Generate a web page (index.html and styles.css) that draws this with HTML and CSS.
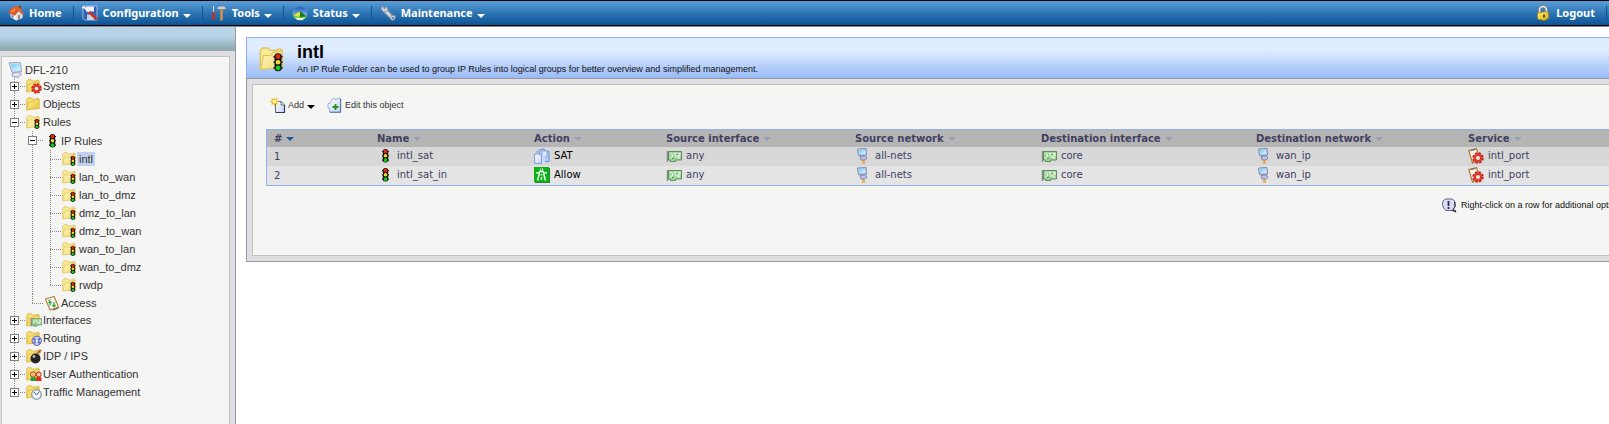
FILE: index.html
```html
<!DOCTYPE html>
<html lang="en">
<head>
<meta charset="utf-8">
<title>DFL-210 - intl</title>
<link rel="stylesheet" href="styles.css">
</head>
<body>
<svg class="defs" aria-hidden="true">
  <defs>
    <linearGradient id="gFolder" x1="0" y1="0" x2="1" y2="1"><stop offset="0" stop-color="#fffbc8"/><stop offset="1" stop-color="#f0d76a"/></linearGradient>
    <linearGradient id="gGold" x1="0" y1="0" x2="1" y2="1"><stop offset="0" stop-color="#fff49c"/><stop offset="1" stop-color="#e9bc2c"/></linearGradient>
    <linearGradient id="gScreen" x1="0" y1="0" x2="1" y2="1"><stop offset="0" stop-color="#6cc9f7"/><stop offset="1" stop-color="#e4f8ff"/></linearGradient>
    <linearGradient id="gPage" x1="0" y1="0" x2="1" y2="1"><stop offset="0" stop-color="#ffffff"/><stop offset="1" stop-color="#c3d3f2"/></linearGradient>
    <linearGradient id="gLock" x1="0" y1="0" x2="1" y2="1"><stop offset="0" stop-color="#fff27a"/><stop offset="1" stop-color="#d9a90c"/></linearGradient>
    <linearGradient id="gSky" x1="0" y1="0" x2="0" y2="1"><stop offset="0" stop-color="#1b55b8"/><stop offset="1" stop-color="#b4dcfb"/></linearGradient>
  </defs>
  <symbol id="folder" viewBox="0 0 16 16">
    <path d="M.7 13.800V3.200L2 1.700h3.200l1 1.300h4l.8-.8h1.500V6" fill="#f9ea96" stroke="#dfc468" stroke-width=".8"/>
    <path d="M.9 14L2.500 6h4l1.800-1.800L13.300 3.200v9.300z" fill="url(#gFolder)" stroke="#e0c45c" stroke-width=".7"/>
  </symbol>
  <symbol id="folder-gold" viewBox="0 0 16 16">
    <path d="M.7 13.800V3.200L2 1.700h3.200l1 1.300h4l.8-.8h1.500V6" fill="#f6df74" stroke="#d8b545" stroke-width=".8"/>
    <path d="M.9 14L2.500 6h4l1.800-1.800L13.300 3.200v9.300z" fill="url(#gGold)" stroke="#dab53f" stroke-width=".7"/>
  </symbol>
  <symbol id="light" viewBox="0 0 16 16">
    <path d="M5 3.500h7M5 7.800h7M5 12.200h7" stroke="#111" stroke-width="1.200"/>
    <rect x="5.800" y="1" width="5.400" height="13.600" rx="2.500" fill="#111"/>
    <circle cx="8.500" cy="3.500" r="1.900" fill="#e02617"/><circle cx="8.500" cy="7.800" r="1.800" fill="#f2d934"/><circle cx="8.500" cy="12.100" r="1.900" fill="#16c81c"/>
  </symbol>
  <symbol id="gear" viewBox="0 0 16 16">
    <circle cx="8" cy="8" r="6.400" fill="none" stroke="#b71f16" stroke-width="2.400" stroke-dasharray="3.200 1.820"/>
    <circle cx="8" cy="8" r="4.400" fill="#f6e9e2" stroke="#db3a2c" stroke-width="3.400"/>
  </symbol>
  <symbol id="f-light" viewBox="0 0 16 16"><use href="#folder" width="16" height="16"/><use href="#light" x="4.500" y="4" width="12" height="12"/></symbol>
  <symbol id="f-gear" viewBox="0 0 16 16"><use href="#folder-gold" width="16" height="16"/><use href="#gear" x="5" y="5" width="11" height="11"/></symbol>
  <symbol id="card" viewBox="0 0 16 16">
    <path d="M1.500 3v11" stroke="#858b85" stroke-width="1.500"/>
    <path d="M2.500 3.500h13v8.500h-6v1.500h-5V12h-2z" fill="#a5d6a0" stroke="#548353" stroke-width=".9"/>
    <path d="M4.500 5.500l2 1v2l-2 1.500M8 5.500h2l-1 2 2 2M12 5.500h2v2h-2v2.500h2" stroke="#edfaea" fill="none"/>
    <path d="M6 11l2-1M11 6v1" stroke="#398d38"/>
  </symbol>
  <symbol id="f-card" viewBox="0 0 16 16"><use href="#folder-gold" width="16" height="16"/><use href="#card" x="4" y="4" width="12" height="12"/></symbol>
  <symbol id="f-route" viewBox="0 0 16 16"><use href="#folder-gold" width="16" height="16"/><circle cx="10.800" cy="10.800" r="4.700" fill="#c2c5ef" stroke="#6368b4"/><path d="M7.500 8.500l2 2M14 8.500l-2 2M7.500 13.500l2-2M14 13.500l-2-2" stroke="#4c51a4" stroke-width="1.300"/><circle cx="10.800" cy="10.800" r="1" fill="#fff"/></symbol>
  <symbol id="f-bomb" viewBox="0 0 16 16"><use href="#folder-gold" width="16" height="16"/><path d="M11 6l2-2.500 1.500.5" stroke="#65564a" stroke-width="1.200" fill="none"/><path d="M14 1v4M12.500 2.500h3.500" stroke="#ef6a25"/><circle cx="9.500" cy="10.500" r="5" fill="#252525"/><circle cx="8" cy="8.500" r="1.400" fill="#b6b6b6"/></symbol>
  <symbol id="f-user" viewBox="0 0 16 16"><use href="#folder-gold" width="16" height="16"/><path d="M4.500 15v-3q3-3 5.500 0v3z" fill="#2ba13b"/><circle cx="7" cy="8.500" r="2.700" fill="#f1ba78" stroke="#a45a19"/><path d="M10 15v-3q3-3 5.500 0v3z" fill="#e22a20"/><circle cx="12.700" cy="8.500" r="2.500" fill="#f2c5ab" stroke="#b8251c"/></symbol>
  <symbol id="f-clock" viewBox="0 0 16 16"><use href="#folder-gold" width="16" height="16"/><circle cx="10.500" cy="10.500" r="4.800" fill="#eef3f8" stroke="#8798aa" stroke-width="1.200"/><path d="M8 8l2.500 3 3-3.500" fill="none" stroke="#45678c"/></symbol>
  <symbol id="access" viewBox="0 0 16 16"><path d="M1.500 4L10 1.500 14.500 12 6 15z" fill="#fafcf8" stroke="#b3843e" stroke-width="1.200"/><path d="M4 5.500l3-1" stroke="#999"/><path d="M6 6.500v4M4.800 8L6 6.300 7.500 8M10 7v4.500M8.500 10l1.500 1.700 1.500-1.700" fill="none" stroke="#27a330" stroke-width="1.200"/><path d="M9 15l5.500-2.500" stroke="#91714a" stroke-width="1.500"/></symbol>
  <symbol id="pc" viewBox="0 0 16 16">
    <path d="M1 .8l11.500-.3 1 9-9.500 1z" fill="#d1dcf1" stroke="#8798bb" stroke-width=".8"/>
    <path d="M2.800 2.200l8.700-.3.700 6-7.200.9z" fill="url(#gScreen)"/>
    <path d="M4 11.500l8-1.500 1.500 2.500-3.500 3-6-1.500z" fill="#d3d3ee" stroke="#9c9cc6" stroke-width=".8"/><path d="M5.500 13l5-.8" stroke="#fff"/>
  </symbol>
  <symbol id="net" viewBox="0 0 16 16">
    <path d="M2.500 1l8.500-.5.500 6.500-8 .5z" fill="#c4cfe8" stroke="#7d8db5"/>
    <path d="M4 2.200l6-.3.300 4-5.800.4z" fill="url(#gScreen)"/>
    <path d="M5 8.500l5.500-.7 1.500 2.500-2 1.700H6z" fill="#bdc0e0" stroke="#8287b2"/>
    <path d="M8.500 12v2" stroke="#9a9a9a"/><rect x="7" y="13" width="3" height="3" fill="#f2b14a"/>
  </symbol>
  <symbol id="sat" viewBox="0 0 16 16"><path d="M5 2l5-1 1 2 4 .5v10H6z" fill="#b3ccf8" stroke="#6f91d6"/><path d="M8 3h5v6H8z" fill="#dfe9ff" stroke="#86a5e4"/><path d="M.6 6h5l2 2v7.400H.6z" fill="url(#gPage)" stroke="#7d9ad8"/><path d="M8 8l3-1v7H8z" fill="#c8dafb"/><path d="M3 3v2" stroke="#769ae2"/></symbol>
  <symbol id="allow" viewBox="0 0 16 16"><path d="M1 1h15v15H1z" fill="#367b39"/><path d="M0 0h15v15H0z" fill="#09b316"/><path d="M5.500 6L3.500 13.500M9.500 6l2 7.500M7.500 7v1.500M7.500 10v3" stroke="#eaffea" stroke-width="1.500"/><path d="M2 5.700h3l1-1.200h3l1 1.200h3" fill="none" stroke="#eaffea" stroke-width="1.400"/><path d="M6.500 1.500v3M8.500 1.500v3" stroke="#eaffea"/></symbol>
  <symbol id="service" viewBox="0 0 16 16"><path d="M.8 2.500L8.500.8 12 11l-7.500 4z" fill="#faf4ea" stroke="#b17531" stroke-width="1.200"/><path d="M3 2.500l4-1.200" stroke="#777" stroke-width="1.500"/><use href="#gear" x="4" y="4" width="12" height="12"/></symbol>
  <symbol id="home" viewBox="0 0 16 16"><path d="M2.500 8L7 5l7.500 4-.5 4-6 2.500L2.500 12z" fill="#f2f3f8"/><path d="M8 10v5.500l6.500-2.500V8.500L11.500 6z" fill="#dcdfea"/><path d="M0 7.500L5 2l5.500-1L16 9l-2 .8L10.500 6 7 10.500z" fill="#e0622c"/><path d="M0 7.500L5 2l5 4-3 4.500z" fill="#d9531f"/><path d="M2.500 6.500L6 3l2 2-3.500 3z" fill="#f58a4e"/><path d="M11 .8h2V4l-2-1.500z" fill="#963d20"/><path d="M3.500 9.500l2 1v2.500l-2-1z" fill="#5e79ad"/><path d="M10 10.500l2-.8v4l-2 .8z" fill="#ad7650"/></symbol>
  <symbol id="config" viewBox="0 0 16 16"><path d="M1 1h14v14H2.500L1 13.500z" fill="#345fb0" stroke="#b7cdf1" stroke-width=".8"/><path d="M4 1.500h8v5H4z" fill="#eff4fc"/><path d="M5 9.500h7V15H5z" fill="#c7d4e8"/><path d="M0 3l2-1 5 5" fill="none" stroke="#f0f0f0" stroke-width="1.800"/><path d="M7 7l8 7.500" stroke="#cf3023" stroke-width="2.500"/></symbol>
  <symbol id="tools" viewBox="0 0 16 16"><path d="M2.500 1v7" stroke="#d6dce3"/><path d="M2.500 7v8" stroke="#cf2b1d" stroke-width="2.500"/><path d="M10.500 4v11.500" stroke="#d69345" stroke-width="2.500"/><path d="M5.500 3.500Q7 1 9 1h4q2 1 2.500 3l-2.500.5H8z" fill="#cbd1d8" stroke="#6d7883" stroke-width=".7"/></symbol>
  <symbol id="status" viewBox="0 0 16 16"><ellipse cx="8" cy="8" rx="7.400" ry="6.600" fill="url(#gSky)" stroke="#4f93d5" stroke-width=".6"/><path d="M1 10.500Q3 8 8 7l7 4.500Q12 15 8 15T1 10.500z" fill="#6fcb38"/><path d="M8 6l6.500 5.500L7.500 12z" fill="#157d22"/><path d="M2 10.500l6-4-.5 5.500z" fill="#f5e43d"/><path d="M2.500 12.500q5 1.500 11 0-2 2.700-5.500 2.700t-5.500-2.700z" fill="#edf7d9"/></symbol>
  <symbol id="wrench" viewBox="0 0 16 16"><path d="M4 4.500L12.500 13" stroke="#8990a3" stroke-width="4.600" stroke-linecap="round"/><path d="M4 4.500L12.500 13" stroke="#d1d5e2" stroke-width="2.800" stroke-linecap="round"/><path d="M3 .8L1 3.200l2.200 3.600 3.600-.3 1-3L5.500 1v2.500L4 4z" fill="#d4d7e4" stroke="#81889c" stroke-width=".7"/><path d="M11 10.500l4.300-.2L15 14l-3 1.500-1.500-2z" fill="#ccd0df" stroke="#81889c" stroke-width=".7"/><circle cx="13" cy="13" r="1" fill="#3c6fa9"/></symbol>
  <symbol id="lock" viewBox="0 0 16 16"><path d="M4.500 8V4.500Q5 1.500 8 1.500t3.500 3V7" fill="none" stroke="#777b7f" stroke-width="2.800"/><path d="M4.500 8V4.500Q5 1.500 8 1.500t3.500 3V7" fill="none" stroke="#e4e7e9" stroke-width="1.500"/><path d="M2.500 8l8.500-1.500 2.500 1.300v5.400L9.500 15.500l-7-1.500z" fill="url(#gLock)" stroke="#9e8212" stroke-width=".7"/><path d="M9 9.500v3" stroke="#42370c" stroke-width="1.600"/></symbol>
  <symbol id="add" viewBox="0 0 16 16"><path d="M5.500 4.500h6l3 3v8h-9z" fill="url(#gPage)" stroke="#5f6d85"/><path d="M14.500 8v7.500H6" fill="none" stroke="#2d3a54" stroke-width="1.200"/><path d="M11 4.500v3.500h3.500" fill="#fff" stroke="#516485"/><path d="M4.500 1v8M.5 4.500h8M1.500 1.500l6 6M7.500 1.500l-6 6" stroke="#e8b71e" stroke-width="1.300"/><circle cx="4.500" cy="4.500" r="1.900" fill="#fff59c"/></symbol>
  <symbol id="edit" viewBox="0 0 16 16"><path d="M4.500 3.500l2-2.500 1.500 1.500L13.500 1v14H2.500V11H1V6.500h2z" fill="url(#gPage)" stroke="#86a1d6" stroke-width=".8"/><path d="M13.700 2v13.300H3" stroke="#49679f" stroke-width=".9" fill="none"/><path d="M8.500 7v6M5.500 10h6" stroke="#24951c" stroke-width="1.800"/></symbol>
  <symbol id="hint" viewBox="0 0 16 16"><path d="M5 2h6q3 1 3.500 4.500T12 12.500l3 2.500-4-1.500H5Q2 12 1.500 7.500T5 2z" fill="#dcdcf1" stroke="#64658c"/><path d="M13.500 5q2 5-2 8.500l3.500 1-1-1.500" fill="none" stroke="#272943"/><path d="M7.500 4v5M7.500 10v2" stroke="#282a50" stroke-width="1.800"/></symbol>
</svg>

<nav class="menu">
  <a class="menu-item" href="#"><svg class="icon"><use href="#home"/></svg>Home</a>
  <button class="menu-item" type="button"><svg class="icon"><use href="#config"/></svg>Configuration<span class="caret"></span></button>
  <button class="menu-item" type="button"><svg class="icon"><use href="#tools"/></svg>Tools<span class="caret"></span></button>
  <button class="menu-item" type="button"><svg class="icon"><use href="#status"/></svg>Status<span class="caret"></span></button>
  <button class="menu-item last" type="button"><svg class="icon"><use href="#wrench"/></svg>Maintenance<span class="caret"></span></button>
  <a class="menu-item logout" href="#"><svg class="icon"><use href="#lock"/></svg>Logout</a>
</nav>

<div class="page">
  <aside class="sidebar">
    <div class="sidebar-top"></div>
    <div class="tree-panel">
      <a class="root" href="#"><svg class="icon"><use href="#pc"/></svg>DFL-210</a>
      <ul class="tree">
        <li><div class="row"><button class="toggle" type="button" aria-label="Expand System"></button><a href="#"><svg class="icon"><use href="#f-gear"/></svg><span>System</span></a></div></li>
        <li><div class="row"><button class="toggle" type="button" aria-label="Expand Objects"></button><a href="#"><svg class="icon"><use href="#folder-gold"/></svg><span>Objects</span></a></div></li>
        <li><div class="row"><button class="toggle open" type="button" aria-label="Collapse Rules"></button><a href="#"><svg class="icon"><use href="#f-light"/></svg><span>Rules</span></a></div>
          <ul>
            <li><div class="row tall"><button class="toggle open" type="button" aria-label="Collapse IP Rules"></button><a href="#"><svg class="icon"><use href="#light"/></svg><span>IP Rules</span></a></div>
              <ul>
                <li><div class="row leaf"><a href="#"><svg class="icon"><use href="#f-light"/></svg><span class="selected">intl</span></a></div></li>
                <li><div class="row leaf"><a href="#"><svg class="icon"><use href="#f-light"/></svg><span>lan_to_wan</span></a></div></li>
                <li><div class="row leaf"><a href="#"><svg class="icon"><use href="#f-light"/></svg><span>lan_to_dmz</span></a></div></li>
                <li><div class="row leaf"><a href="#"><svg class="icon"><use href="#f-light"/></svg><span>dmz_to_lan</span></a></div></li>
                <li><div class="row leaf"><a href="#"><svg class="icon"><use href="#f-light"/></svg><span>dmz_to_wan</span></a></div></li>
                <li><div class="row leaf"><a href="#"><svg class="icon"><use href="#f-light"/></svg><span>wan_to_lan</span></a></div></li>
                <li><div class="row leaf"><a href="#"><svg class="icon"><use href="#f-light"/></svg><span>wan_to_dmz</span></a></div></li>
                <li><div class="row leaf"><a href="#"><svg class="icon"><use href="#f-light"/></svg><span>rwdp</span></a></div></li>
              </ul>
            </li>
            <li><div class="row leaf short"><a href="#"><svg class="icon"><use href="#access"/></svg><span>Access</span></a></div></li>
          </ul>
        </li>
        <li><div class="row"><button class="toggle" type="button" aria-label="Expand Interfaces"></button><a href="#"><svg class="icon"><use href="#f-card"/></svg><span>Interfaces</span></a></div></li>
        <li><div class="row"><button class="toggle" type="button" aria-label="Expand Routing"></button><a href="#"><svg class="icon"><use href="#f-route"/></svg><span>Routing</span></a></div></li>
        <li><div class="row"><button class="toggle" type="button" aria-label="Expand IDP / IPS"></button><a href="#"><svg class="icon"><use href="#f-bomb"/></svg><span>IDP / IPS</span></a></div></li>
        <li><div class="row"><button class="toggle" type="button" aria-label="Expand User Authentication"></button><a href="#"><svg class="icon"><use href="#f-user"/></svg><span>User Authentication</span></a></div></li>
        <li><div class="row"><button class="toggle" type="button" aria-label="Expand Traffic Management"></button><a href="#"><svg class="icon"><use href="#f-clock"/></svg><span>Traffic Management</span></a></div></li>
      </ul>
    </div>
  </aside>

  <main class="content">
    <header class="title-bar">
      <svg class="title-icon"><use href="#f-light"/></svg>
      <div>
        <h1>intl</h1>
        <p>An IP Rule Folder can be used to group IP Rules into logical groups for better overview and simplified management.</p>
      </div>
    </header>
    <div class="frame">
      <section class="panel">
        <div class="toolbar">
          <button type="button"><svg class="icon"><use href="#add"/></svg>Add<span class="caret"></span></button>
          <button type="button"><svg class="icon"><use href="#edit"/></svg>Edit this object</button>
        </div>
        <table class="rules">
          <colgroup><col class="c-num"><col class="c-name"><col class="c-action"><col class="c-sif"><col class="c-snet"><col class="c-dif"><col class="c-dnet"><col></colgroup>
          <thead>
            <tr><th class="sorted">#</th><th>Name</th><th>Action</th><th>Source interface</th><th>Source network</th><th>Destination interface</th><th>Destination network</th><th>Service</th></tr>
          </thead>
          <tbody>
            <tr>
              <td>1</td>
              <td><span class="cell"><svg class="icon"><use href="#light"/></svg>intl_sat</span></td>
              <td><span class="cell dark"><svg class="icon"><use href="#sat"/></svg>SAT</span></td>
              <td><span class="cell"><svg class="icon"><use href="#card"/></svg>any</span></td>
              <td><span class="cell"><svg class="icon"><use href="#net"/></svg>all-nets</span></td>
              <td><span class="cell"><svg class="icon"><use href="#card"/></svg>core</span></td>
              <td><span class="cell"><svg class="icon"><use href="#net"/></svg>wan_ip</span></td>
              <td><span class="cell"><svg class="icon"><use href="#service"/></svg>intl_port</span></td>
            </tr>
            <tr>
              <td>2</td>
              <td><span class="cell"><svg class="icon"><use href="#light"/></svg>intl_sat_in</span></td>
              <td><span class="cell dark"><svg class="icon"><use href="#allow"/></svg>Allow</span></td>
              <td><span class="cell"><svg class="icon"><use href="#card"/></svg>any</span></td>
              <td><span class="cell"><svg class="icon"><use href="#net"/></svg>all-nets</span></td>
              <td><span class="cell"><svg class="icon"><use href="#card"/></svg>core</span></td>
              <td><span class="cell"><svg class="icon"><use href="#net"/></svg>wan_ip</span></td>
              <td><span class="cell"><svg class="icon"><use href="#service"/></svg>intl_port</span></td>
            </tr>
          </tbody>
        </table>
        <p class="hint"><svg class="icon"><use href="#hint"/></svg>Right-click on a row for additional options.</p>
      </section>
    </div>
  </main>
</div>
</body>
</html>
```

FILE: styles.css
```css
* { box-sizing: border-box; }
html, body { height: 100%; }
body {
  margin: 0;
  display: flex;
  flex-direction: column;
  overflow: hidden;
  background: #fff;
  font-family: "Liberation Sans", Arial, sans-serif;
  font-size: 11px;
  color: #333;
}
a { color: inherit; text-decoration: none; }
button { font: inherit; color: inherit; background: none; border: 0; padding: 0; }
ul { list-style: none; margin: 0; padding: 0; }
h1, p { margin: 0; }
.defs { position: absolute; width: 0; height: 0; }
.icon { width: 16px; height: 16px; flex: none; }
.caret {
  border: 4px solid transparent;
  border-top-color: currentColor;
  border-bottom: 0;
}

/* Menu bar */
.menu {
  display: flex;
  align-items: center;
  height: 26px;
  padding-bottom: 1px;
  flex: none;
  border-top: 1px solid #000;
  border-bottom: 1px solid #000;
  background: linear-gradient(#5a9fd8, #2d75b3 50%, #0d5496);
  color: #fff;
  font: bold 11px "Noto Sans", "Open Sans", sans-serif;
}
.menu-item {
  display: flex;
  align-items: center;
  gap: 4px;
  height: 14px;
  padding: 0 11px 0 8px;
  border-right: 1px solid #0f5594;
}
.menu-item .icon { margin-right: 1px; }
.menu-item .caret { margin-top: 6px; }
.last { border-right: 0; }
.logout { margin-left: auto; margin-right: 2px; }

/* Sidebar */
.page { display: flex; flex: 1; min-height: 0; border-top: 1px solid #8a8a8a; }
.sidebar {
  display: flex;
  flex-direction: column;
  width: 236px;
  flex: none;
  background: #dfdee3;
  border-right: 1px solid #9b9ba2;
}
.sidebar-top {
  height: 24px;
  flex: none;
  background: linear-gradient(#b7d4e9 40%, #89a9ad);
  border-bottom: 1px solid #a6a6ac;
}
.tree-panel {
  flex: 1;
  margin: 5px 5px 0 1px;
  padding: 5px 4px 0;
  background: #f5f5f3;
  border: 1px solid #c3c3bb;
  border-bottom: 0;
}
.root { display: flex; align-items: center; height: 15px; gap: 1px; padding-left: 2px; }
.tree { overflow: hidden; }
.tree li {
  background: repeating-linear-gradient(#888 0 1px, transparent 1px 2px) 8px 0 / 1px 100% no-repeat;
}
.tree li:last-child { background-size: 1px 9px; }
.tree ul { padding-left: 18px; }
.row {
  display: flex;
  align-items: center;
  height: 18px;
  background: repeating-linear-gradient(90deg, #888 0 1px, transparent 1px 2px) 8px 9px / 11px 1px no-repeat;
}
.row.tall { height: 19px; }
.row.short { height: 17px; }
.row a { display: flex; align-items: center; gap: 1px; }
.leaf { padding-left: 20px; }
.toggle {
  width: 9px;
  height: 9px;
  margin: 0 7px 0 4px;
  border: 1px solid #808080;
  background:
    linear-gradient(#000, #000) center / 5px 1px no-repeat,
    linear-gradient(#000, #000) center / 1px 5px no-repeat,
    #fff;
}
.toggle.open { background: linear-gradient(#000, #000) center / 5px 1px no-repeat, #fff; }
.selected { background: #c1d2ee; padding: 0 2px; margin: 0 -2px; line-height: 14px; }

/* Content runs past the right edge of the window */
.content { flex: 1; min-width: 1420px; margin: 10px 0 0 10px; }
.title-bar {
  display: flex;
  align-items: center;
  gap: 10px;
  height: 41px;
  padding: 2px 0 0 12px;
  border: 1px solid #8fb0ee;
  border-bottom: 0;
  background: linear-gradient(#dfebff, #e0edff 30%, #98baf6);
  color: #111;
  font-size: 9px;
}
.title-icon { width: 28px; height: 28px; }
.title-bar h1 { font-size: 18px; line-height: 20px; color: #000; }
.title-bar p { line-height: 14px; }
.frame {
  padding: 5px;
  background: #dfdfe3;
  border: 1px solid #98989e;
}
.panel {
  min-height: 172px;
  padding: 12px 13px;
  background: #f5f5f3;
  border: 1px solid #c3c3bb;
}
.toolbar { display: flex; gap: 12px; height: 32px; padding: 0 4px; font-size: 9px; }
.toolbar button { display: flex; align-items: center; gap: 2px; height: 16px; }
.toolbar .caret { color: #000; margin: 4px 0 0 1px; }

/* Rules table */
.rules {
  width: 100%;
  table-layout: fixed;
  border-collapse: separate;
  border-spacing: 0;
  border: 1px solid #8fb0ee;
  font: 10px "DejaVu Sans", Verdana, sans-serif;
  color: #404060;
}
.c-num { width: 103px; }
.c-name { width: 157px; }
.c-action { width: 132px; }
.c-sif { width: 189px; }
.c-snet { width: 186px; }
.c-dif { width: 215px; }
.c-dnet { width: 212px; }
.rules th { height: 17px; padding: 0 0 0 7px; text-align: left; background: #b5b5b5; white-space: nowrap; }
.rules th::after {
  content: "";
  display: inline-block;
  margin-left: 4px;
  border: 4px solid transparent;
  border-top-color: #93a2b1;
  border-bottom: 0;
  vertical-align: 1px;
}
.rules .sorted::after { border-top-color: #1d5a94; }
.rules td { height: 19px; padding: 0 0 0 7px; background: #d8d8d8; }
.rules tr:nth-child(2) td { background: #e4e4e4; }
.cell { display: flex; align-items: center; gap: 4px; margin-bottom: 2px; }
.dark { color: #000; }
.hint { display: flex; align-items: center; gap: 4px; padding: 11px 0 0 1175px; font-size: 9px; color: #111; white-space: nowrap; }
```
